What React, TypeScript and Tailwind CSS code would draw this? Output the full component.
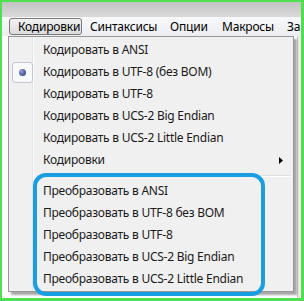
import React from "react";

const topItems = [
  "Кодировать в ANSI",
  "Кодировать в UTF-8 (без BOM)",
  "Кодировать в UTF-8",
  "Кодировать в UCS-2 Big Endian",
  "Кодировать в UCS-2 Little Endian",
];

const convertItems = [
  "Преобразовать в ANSI",
  "Преобразовать в UTF-8 без BOM",
  "Преобразовать в UTF-8",
  "Преобразовать в UCS-2 Big Endian",
  "Преобразовать в UCS-2 Little Endian",
];

const menuBar = [
  { label: "Кодировки", w: "w-[73px]", active: true },
  { label: "Синтаксисы", w: "w-[80px]" },
  { label: "Опции", w: "w-[52px]" },
  { label: "Макросы", w: "w-[65px]" },
  { label: "За", w: "w-[30px]" },
];

const MenuRow = ({ text, checked }: { text: string; checked?: boolean }) => {
  return (
    <div className="relative flex h-[22px] items-center pl-[32px] text-[12px] tracking-[-0.25px] text-[#1a1a1a]">
      {checked && (
        <div className="absolute left-[1px] top-[1px] flex h-[21px] w-[21px] items-center justify-center rounded-[3px] border border-[#c3c7cd] bg-[#f8f9fa]">
          <div className="h-[7px] w-[7px] rounded-full bg-[radial-gradient(circle_at_35%_35%,#8f9fd6,#26306a)]" />
        </div>
      )}
      <span className="whitespace-nowrap">{text}</span>
    </div>
  );
};

export default function App() {
  return (
    <div
      className="h-[301px] w-[304px] overflow-hidden border-[2px] border-r-[3px] border-b-[3px] border-[#4fe04f] bg-white"
      style={{ fontFamily: '"Noto Sans", "Open Sans", sans-serif' }}
    >
      {/* window strip above the menu bar */}
      <div className="h-[15px] bg-gradient-to-b from-[#c3c3c3] to-[#d9d9d9]" />

      {/* menu bar */}
      <div className="flex h-[19px] items-center bg-gradient-to-b from-[#f7f8fa] to-[#eceef1] pl-[7px] text-[12px] tracking-[-0.2px] text-black">
        {menuBar.map((m) => (
          <div
            key={m.label}
            className={`${m.w} flex h-[17px] shrink-0 items-center whitespace-nowrap pl-[8px] ${
              m.active ? "rounded-[3px] border border-[#7a7a7a] bg-gradient-to-b from-[#f2f2f2] to-[#dcdcdc] pl-[6px]" : ""
            }`}
          >
            {m.label}
          </div>
        ))}
      </div>

      {/* editor area with the open dropdown */}
      <div className="flex h-[263px] bg-white pl-[6px]">
        <div className="relative h-[256px] w-[286px] shrink-0 border border-[#979797] bg-[linear-gradient(to_right,#f0f0f0_23px,#e2e3e3_23px,#e2e3e3_24px,#ffffff_24px,#ffffff_25px,#f0f0f0_25px)] p-[2px] shadow-[3px_3px_2px_rgba(0,0,0,0.35)]">
          {topItems.map((t, i) => (
            <MenuRow key={t} text={t} checked={i === 1} />
          ))}
          <div className="flex h-[22px] items-center justify-between pl-[32px] pr-[8px] text-[12px] tracking-[-0.25px] text-[#1a1a1a]">
            <span>Кодировки</span>
            <svg width="4" height="7" viewBox="0 0 4 7">
              <path d="M0 0 L4 3.5 L0 7 Z" fill="#000" />
            </svg>
          </div>
          <div className="flex h-[9px] flex-col justify-center pl-[26px]">
            <div className="h-[1px] bg-[#e0e0e0]" />
            <div className="h-[1px] bg-white" />
          </div>
          {convertItems.map((t) => (
            <MenuRow key={t} text={t} />
          ))}

          {/* blue annotation frame */}
          <div className="pointer-events-none absolute left-[24px] top-[136px] h-[123px] w-[232px] rounded-[13px] border-[4px] border-[#1a9ee2]" />
        </div>
        <div className="ml-[3px] h-full w-[1px] bg-[#c8c8c8]" />
        <div className="h-full flex-1 bg-[#ececec]" />
      </div>
    </div>
  );
}
